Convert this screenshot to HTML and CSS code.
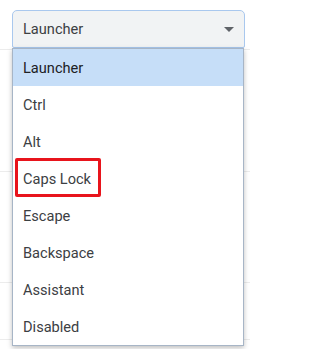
FILE: index.html
```html
<!DOCTYPE html>
<html>
<head>
<meta charset="utf-8">
<link rel="stylesheet" href="styles.css">
</head>
<body>
<div class="page">
  <div class="bg-rows">
    <div class="bg-row r1"></div>
    <div class="bg-row r2"></div>
    <div class="bg-row r3"></div>
    <div class="bg-row r4"></div>
  </div>
  <div class="select">
    <span class="select-label">Launcher</span>
    <svg class="arrow" width="10" height="5" viewBox="0 0 10 5"><path d="M0 0 L10 0 L5 5 Z" fill="#5f6368"/></svg>
  </div>
  <ul class="menu">
    <li class="item selected">Launcher</li>
    <li class="item">Ctrl</li>
    <li class="item">Alt</li>
    <li class="item marked">Caps Lock<span class="mark"></span></li>
    <li class="item">Escape</li>
    <li class="item">Backspace</li>
    <li class="item">Assistant</li>
    <li class="item">Disabled</li>
  </ul>
</div>
</body>
</html>
```
FILE: styles.css
```css
html, body {
  margin: 0;
  padding: 0;
  background: #ffffff;
}
.page {
  position: relative;
  width: 250px;
  height: 349px;
  overflow: hidden;
  font-family: Roboto, "Liberation Sans", sans-serif;
}
.bg-rows {
  display: flex;
  flex-direction: column;
}
.bg-row {
  border-bottom: 1px solid #ececec;
}
.r1 { height: 49px; }
.r2 { height: 121px; }
.r3 { height: 110px; }
.r4 { height: 56px; }
.select {
  position: absolute;
  left: 12px;
  top: 10px;
  width: 233px;
  height: 38px;
  box-sizing: border-box;
  border: 1px solid #a9c8ee;
  border-radius: 5px 5px 2px 2px;
  background: #f1f3f4;
  display: flex;
  align-items: center;
  justify-content: space-between;
  padding: 0 10px 0 10px;
}
.select-label {
  font-size: 14.6px;
  color: #3c4043;
}
.arrow {
  display: block;
}
.menu {
  position: absolute;
  left: 12px;
  top: 48px;
  width: 232px;
  margin: 0;
  padding: 0;
  list-style: none;
  box-sizing: border-box;
  border: 1px solid #a7b5c6;
  background: #ffffff;
  box-shadow: 0 2px 5px rgba(0, 0, 0, 0.25);
}
.item {
  position: relative;
  height: 37px;
  display: flex;
  align-items: center;
  padding-left: 10px;
  font-size: 14.6px;
  color: #3c4043;
}
.item.selected {
  background: #c6def8;
  color: #202124;
}
.mark {
  position: absolute;
  left: 2px;
  top: -2px;
  width: 86px;
  height: 39px;
  box-sizing: border-box;
  border: 3px solid #e8141c;
  border-radius: 2px;
}
```
